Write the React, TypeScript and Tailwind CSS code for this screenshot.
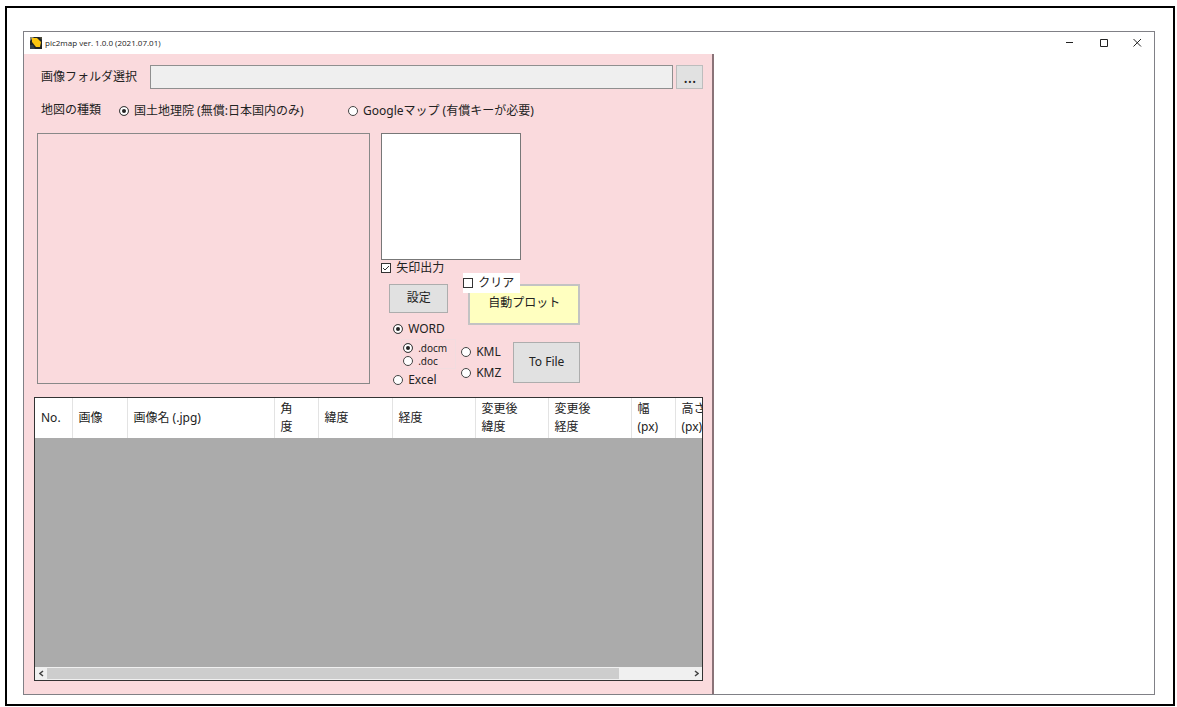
import { useState } from "react"
import type { ReactNode } from "react"

const columns = [
  { name: "No.", width: "w-[37px]" },
  { name: "画像", width: "w-[55px]" },
  { name: "画像名 (.jpg)", width: "w-[147px]" },
  { name: "角\n度", width: "w-[44px]" },
  { name: "緯度", width: "w-[74px]" },
  { name: "経度", width: "w-[83px]" },
  { name: "変更後\n緯度", width: "w-[73px]" },
  { name: "変更後\n経度", width: "w-[83px]" },
  { name: "幅\n(px)", width: "w-[44px]" },
  { name: "高さ\n(px)", width: "w-[44px]" },
]

type RadioProps = {
  name: string
  value: string
  selected: string
  onSelect: (value: string) => void
  className?: string
  children: ReactNode
}

function Radio({ name, value, selected, onSelect, className = "", children }: RadioProps) {
  return (
    <label className={`flex items-center gap-[5px] whitespace-nowrap ${className}`}>
      <input
        type="radio"
        name={name}
        value={value}
        checked={selected === value}
        onChange={() => onSelect(value)}
        className="size-[10px] shrink-0 appearance-none rounded-full border border-[#444] bg-white checked:bg-[#222] checked:shadow-[inset_0_0_0_2px_#fff]"
      />
      {children}
    </label>
  )
}

function Checkbox({ defaultChecked = false, children }: { defaultChecked?: boolean; children: ReactNode }) {
  return (
    <label className="relative flex items-center gap-[5px] whitespace-nowrap">
      <input
        type="checkbox"
        defaultChecked={defaultChecked}
        className="peer size-[10px] shrink-0 appearance-none border border-[#333] bg-white"
      />
      <svg viewBox="0 0 10 10" className="pointer-events-none invisible absolute left-0 size-[10px] peer-checked:visible">
        <path d="M2 5 L4 7 L8 3" fill="none" stroke="#333" strokeWidth="1" />
      </svg>
      {children}
    </label>
  )
}

function AppIcon() {
  return (
    <svg viewBox="0 0 12 12" className="size-3 shrink-0">
      <rect width="12" height="12" fill="#1f2426" />
      <path d="M0 0H4L1 3L0 4Z" fill="#8e8a72" />
      <path d="M2 1L7 1L11 5L10 10L6 10L2 5Z" fill="#fcc60f" />
      <path d="M0 8L3 8L5 12H0Z" fill="#34404a" />
      <path d="M9 0H12V3Z" fill="#4d4b3b" />
    </svg>
  )
}

function TitleBar() {
  return (
    <header className="flex h-[22px] shrink-0 items-center pl-[6px]">
      <AppIcon />
      <h1 className="ml-[3px] flex-1 font-['Open_Sans','Noto_Sans',sans-serif] text-[8px] text-[#222]">
        pic2map ver. 1.0.0 (2021.07.01)
      </h1>
      <button type="button" aria-label="最小化" className="flex w-[34px] justify-center">
        <svg viewBox="0 0 9 9" className="size-[9px]" fill="none" stroke="#222">
          <path d="M1 3.5H8" />
        </svg>
      </button>
      <button type="button" aria-label="最大化" className="flex w-[34px] justify-center">
        <svg viewBox="0 0 9 9" className="size-[9px]" fill="none" stroke="#222">
          <path d="M1.5 0.5H8.5V7.5H1.5Z" />
        </svg>
      </button>
      <button type="button" aria-label="閉じる" className="flex w-[34px] justify-center">
        <svg viewBox="0 0 9 9" className="size-[9px]" fill="none" stroke="#222">
          <path d="M0.5 0L8 7.5M8 0L0.5 7.5" />
        </svg>
      </button>
    </header>
  )
}

function OutputSettings() {
  const [output, setOutput] = useState("word")
  const [wordType, setWordType] = useState("docm")

  return (
    <div className="flex w-[199px] flex-col">
      <div className="h-[127px] w-[140px] shrink-0 border border-[#777] bg-white" />
      <div className="flex h-[15px] shrink-0 items-center">
        <Checkbox defaultChecked>矢印出力</Checkbox>
      </div>
      <div className="mt-[9px] flex">
        <div className="flex w-20 flex-col">
          <button type="button" className="ml-2 h-[29px] w-[59px] border border-[#adadad] bg-[#e1e1e1] pb-[2px]">
            設定
          </button>
          <Radio name="output" value="word" selected={output} onSelect={setOutput} className="mt-2 ml-3 h-4">
            WORD
          </Radio>
          <fieldset className="mt-[2px] ml-5 flex w-[55px] flex-col border border-[#f2dcdf] py-px pl-px text-[10px]">
            <Radio name="word-type" value="docm" selected={wordType} onSelect={setWordType} className="h-[13px]">
              .docm
            </Radio>
            <Radio name="word-type" value="doc" selected={wordType} onSelect={setWordType} className="h-[13px]">
              .doc
            </Radio>
          </fieldset>
          <Radio name="output" value="excel" selected={output} onSelect={setOutput} className="mt-[3px] ml-3 h-4">
            Excel
          </Radio>
        </div>
        <div className="flex flex-1 flex-col">
          <div className="relative">
            <button
              type="button"
              className="ml-[7px] h-[41px] w-[112px] border-2 border-[#c3c3c3] bg-[#ffffc0] pb-[3px]"
            >
              自動プロット
            </button>
            {/* Sits over the corner of the plot button */}
            <div className="absolute -top-[11px] left-[2px] flex h-5 w-[57px] items-center bg-white">
              <Checkbox>クリア</Checkbox>
            </div>
          </div>
          <div className="mt-[17px] flex items-center justify-between">
            <div className="flex flex-col gap-[3px]">
              <Radio name="output" value="kml" selected={output} onSelect={setOutput}>
                KML
              </Radio>
              <Radio name="output" value="kmz" selected={output} onSelect={setOutput}>
                KMZ
              </Radio>
            </div>
            <button type="button" className="h-[41px] w-[67px] border border-[#adadad] bg-[#e1e1e1] pb-[2px]">
              To File
            </button>
          </div>
        </div>
      </div>
    </div>
  )
}

function PhotoTable() {
  return (
    <div className="flex min-h-0 flex-1 flex-col border border-[#333] bg-[#ababab]">
      <div className="flex-1 overflow-hidden">
        <table className="w-[684px] table-fixed border-collapse bg-white">
          <thead>
            <tr className="h-10">
              {columns.map((column) => (
                <th
                  key={column.name}
                  scope="col"
                  className={`${column.width} border-r border-[#e3e3e3] p-0 pl-[6px] text-left align-middle font-normal whitespace-pre`}
                >
                  {column.name}
                </th>
              ))}
            </tr>
          </thead>
          <tbody />
        </table>
      </div>
      {/* Horizontal scroll bar */}
      <div className="flex h-[13px] shrink-0 items-center bg-[#f0f0f0]">
        <button type="button" aria-label="左へスクロール" className="flex w-3 justify-center">
          <svg viewBox="0 0 5 7" className="h-[7px] w-[5px]" fill="none" stroke="#444" strokeWidth="1.5">
            <path d="M4 1L1 3.5L4 6" />
          </svg>
        </button>
        <div className="h-[11px] flex-1">
          <div className="h-full w-8/9 bg-[#cdcdcd]" />
        </div>
        <button type="button" aria-label="右へスクロール" className="flex w-3 justify-center">
          <svg viewBox="0 0 5 7" className="h-[7px] w-[5px]" fill="none" stroke="#444" strokeWidth="1.5">
            <path d="M1 1L4 3.5L1 6" />
          </svg>
        </button>
      </div>
    </div>
  )
}

export default function App() {
  const [mapType, setMapType] = useState("gsi")

  return (
    <div className="flex h-screen bg-white pt-[6px] pr-[2px] pb-px pl-[5px] font-['Noto_Sans','Noto_Sans_CJK_JP',sans-serif] text-[12px] leading-[18px] text-[#222]">
      <div className="flex flex-1 border-2 border-black pt-[23px] pr-[18px] pb-[9px] pl-4">
        <div className="flex flex-1 flex-col border border-[#808086]">
          <TitleBar />
          <div className="grid min-h-0 flex-1 grid-cols-[691fr_440fr]">
            <section className="flex min-h-0 min-w-0 flex-col border-r-2 border-[#8a7378] bg-[#fadadd] pt-[11px] pr-[9px] pb-[13px] pl-[10px]">
              <div className="flex h-6 items-center pl-[7px]">
                <label htmlFor="folder" className="w-[109px]">
                  画像フォルダ選択
                </label>
                <input
                  id="folder"
                  type="text"
                  readOnly
                  className="h-6 min-w-0 flex-1 border border-[#8f8f8f] bg-[#efefef] px-1"
                />
                <button
                  type="button"
                  aria-label="フォルダを参照"
                  className="ml-[3px] h-6 w-[27px] border border-[#bdbdbd] bg-[#e1e1e1] text-base leading-4"
                >
                  ...
                </button>
              </div>

              <div className="flex h-11 items-center pl-[7px]" role="radiogroup" aria-labelledby="map-type">
                <span id="map-type" className="w-[78px] pb-[2px]">
                  地図の種類
                </span>
                <Radio name="map" value="gsi" selected={mapType} onSelect={setMapType} className="w-[229px]">
                  国土地理院 (無償:日本国内のみ)
                </Radio>
                <Radio name="map" value="google" selected={mapType} onSelect={setMapType}>
                  Googleマップ (有償キーが必要)
                </Radio>
              </div>

              <div className="mb-[13px] flex h-[251px] gap-[11px] pl-[3px]">
                <div className="w-1/2 border border-[#888]" />
                <OutputSettings />
              </div>

              <PhotoTable />
            </section>
            <section aria-label="地図" className="bg-white" />
          </div>
        </div>
      </div>
    </div>
  )
}
